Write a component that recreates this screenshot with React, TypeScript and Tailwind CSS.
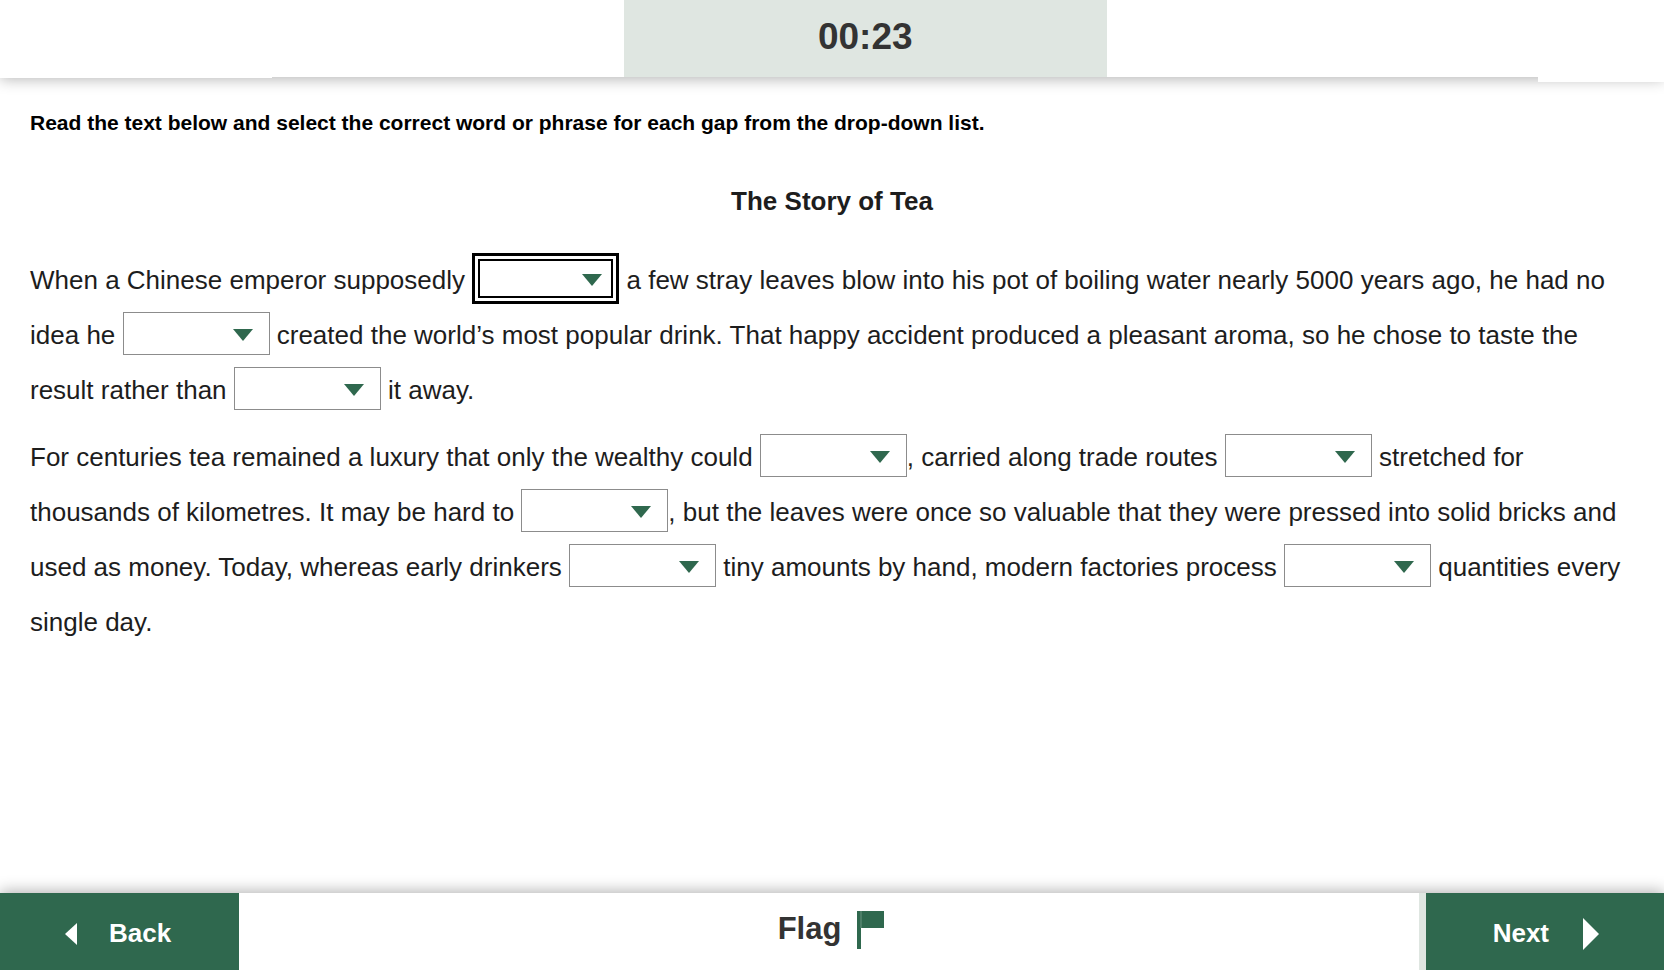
import { useState } from 'react'

interface GapProps {
  id: number
  active?: boolean
}

function Gap({ id, active }: GapProps) {
  const [value, setValue] = useState('')

  // overflow-hidden puts the baseline on the bottom edge of the box
  return (
    <span
      className={
        active
          ? 'relative -my-1 inline-block h-[51px] w-[147px] overflow-hidden border-[3px] border-black bg-white p-[3px] align-[-11px]'
          : 'relative inline-block h-[43px] w-[147px] overflow-hidden align-[-11px]'
      }
    >
      <select
        aria-label={`Gap ${id}`}
        value={value}
        onChange={(e) => setValue(e.target.value)}
        className={
          active
            ? 'block h-full w-full appearance-none border-2 border-black bg-white px-2 text-xl outline-none'
            : 'block h-full w-full appearance-none border border-[#8c8c8c] bg-white px-2 text-xl outline-none'
        }
      >
        <option value=""></option>
      </select>
      <svg
        viewBox="0 0 20 12"
        className={
          active
            ? 'pointer-events-none absolute top-[18px] right-[14px] h-3 w-5'
            : 'pointer-events-none absolute top-[17px] right-[17px] h-3 w-5'
        }
      >
        <path d="M0 0H20L10 12Z" fill="#2f684e" />
      </svg>
    </span>
  )
}

function Header() {
  return (
    <header className="relative flex h-[77px] items-start bg-white shadow-[0_2px_14px_rgba(0,0,0,0.3)]">
      <div className="flex h-[77px] w-[37.5%] items-start">
        <div className="h-[78px] w-[272px] bg-white" />
      </div>
      <div className="flex h-[77px] w-[29%] items-center justify-center bg-[#dfe6e1] pb-1 text-[37px] font-bold text-[#333]">
        <time>00:23</time>
      </div>
      <div className="flex flex-1 items-start justify-end">
        <div className="h-[82px] w-[126px] bg-white" />
      </div>
    </header>
  )
}

function Footer() {
  return (
    <footer className="relative flex h-[77px] bg-white font-bold shadow-[0_-2px_14px_rgba(0,0,0,0.3)]">
      <button className="flex w-[239px] items-center bg-[#2f684e] pt-1 pl-[65px] text-[26px] text-white">
        <svg viewBox="0 0 12 22" className="mr-8 h-[22px] w-3">
          <path d="M12 0V22L0 11Z" fill="currentColor" />
        </svg>
        Back
      </button>
      <button className="flex flex-1 items-center justify-center gap-4 pb-1 pl-1 text-[31px] text-[#333]">
        Flag
        <svg viewBox="0 0 27 38" className="h-[38px] w-[27px]">
          <path d="M0 0H27V17H4V38H0Z" fill="#2f684e" />
          <path d="M4 0V17" stroke="#6b9480" strokeWidth="1" />
        </svg>
      </button>
      <button className="flex w-[245px] items-center justify-end border-l-[7px] border-[#dfe6e1] bg-[#2f684e] pt-1 pr-[65px] text-[26px] text-white">
        Next
        <svg viewBox="0 0 16 32" className="ml-[34px] h-8 w-4">
          <path d="M0 0V32L16 16Z" fill="currentColor" />
        </svg>
      </button>
    </footer>
  )
}

export default function App() {
  return (
    <div className="flex min-h-screen flex-col bg-white font-['Liberation_Sans',Arial,sans-serif]">
      <Header />
      <main className="flex-1 px-[30px] pt-[30px] text-[26px] leading-[55px] text-[#1d1d1d]">
        <p className="text-[21px] leading-8 font-bold text-black">
          Read the text below and select the correct word or phrase for each gap from the drop-down list.
        </p>
        <h1 className="mt-[35px] mb-6 text-center font-bold">The Story of Tea</h1>
        <p className="mb-3">
          When a Chinese emperor supposedly <Gap id={1} active /> a few stray leaves blow into his pot of boiling
          water nearly 5000 years ago, he had no idea he <Gap id={2} /> created the world’s most popular drink. That
          happy accident produced a pleasant aroma, so he chose to taste the result rather than <Gap id={3} /> it
          away.
        </p>
        <p>
          For centuries tea remained a luxury that only the wealthy could <Gap id={4} />, carried along trade
          routes <Gap id={5} /> stretched for thousands of kilometres. It may be hard to <Gap id={6} />, but the
          leaves were once so valuable that they were pressed into solid bricks and used as money. Today, whereas
          early drinkers <Gap id={7} /> tiny amounts by hand, modern factories process <Gap id={8} /> quantities
          every single day.
        </p>
      </main>
      <Footer />
    </div>
  )
}
